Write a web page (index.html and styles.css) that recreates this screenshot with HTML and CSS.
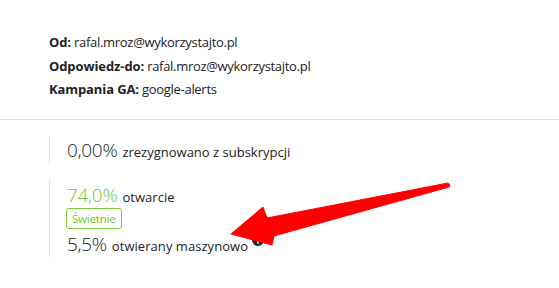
FILE: index.html
```html
<!DOCTYPE html>
<html lang="pl">
<head>
<meta charset="utf-8">
<title>Kampania</title>
<link rel="stylesheet" href="styles.css">
</head>
<body>
<div class="page">
  <section class="meta">
    <div class="meta-row"><b>Od:</b> rafal.mroz@wykorzystajto.pl</div>
    <div class="meta-row"><b>Odpowiedz-do:</b> rafal.mroz@wykorzystajto.pl</div>
    <div class="meta-row"><b>Kampania GA:</b> google-alerts</div>
  </section>
  <section class="stats">
    <div class="stat stat-unsub">
      <div class="stat-line"><span class="stat-value">0,00%</span> <span class="stat-label">zrezygnowano z subskrypcji</span></div>
    </div>
    <div class="stat stat-open">
      <div class="stat-line"><span class="stat-value green">74,0%</span> <span class="stat-label">otwarcie</span></div>
      <div class="badge-row"><span class="badge">Świetnie</span></div>
      <div class="stat-line"><span class="stat-value">5,5%</span> <span class="stat-label">otwierany maszynowo</span><svg class="info" width="12" height="12" viewBox="0 0 12 12"><circle cx="6" cy="6" r="6" fill="#2b2b2b"/><rect x="5.2" y="5" width="1.6" height="4.5" fill="#fff"/><circle cx="6" cy="3.2" r="0.9" fill="#fff"/></svg></div>
    </div>
  </section>
  <svg class="arrow" width="559" height="288" viewBox="0 0 559 288">
    <path d="M231 234 L263 207 L267 218 L448 183 Q451 184.5 449 187 L274 236 L272 245 Z" fill="#ff0000" stroke="#ff0000" stroke-width="1" stroke-linejoin="round"/>
  </svg>
</div>
</body>
</html>
```
FILE: styles.css
```css
html, body {
  margin: 0;
  padding: 0;
  background: #fff;
}
body {
  font-family: "Open Sans", "Liberation Sans", sans-serif;
  color: #222;
}
.page {
  position: relative;
  width: 559px;
  height: 288px;
  overflow: hidden;
}
.meta {
  padding: 31px 0 17.5px 49px;
  border-bottom: 1px solid #dcdcdc;
  font-size: 13px;
  letter-spacing: -0.3px;
}
.meta-row {
  line-height: 23.5px;
  height: 23.5px;
}
.meta-row b {
  font-weight: 700;
  letter-spacing: -0.1px;
}
.stats {
  padding: 16px 0 0 49px;
  display: flex;
  flex-direction: column;
  gap: 17px;
}
.stat {
  border-left: 1px solid #dcdcdc;
  padding-left: 17px;
}
.stat-line {
  font-size: 19px;
  font-weight: 300;
  line-height: 24px;
  height: 24px;
  white-space: nowrap;
}
.stat-unsub {
  padding-top: 1px;
}
.stat-unsub .stat-line {
  line-height: 26px;
  height: 26px;
}
.stat-open {
  padding: 3px 0 1px 16px;
}
.stat-open .stat-line {
  padding-left: 1px;
}
.stat-value {
  font-size: 19px;
  font-weight: 300;
  letter-spacing: -0.3px;
  color: #222;
}
.stat-value.green {
  color: #6fc52a;
}
.stat-label {
  font-size: 13px;
  font-weight: 400;
  line-height: 1;
  letter-spacing: 0;
  color: #222;
}
.stat-open .stat-label {
  letter-spacing: 0.05px;
}
.info {
  margin-left: 4px;
  vertical-align: 5px;
}
.badge-row {
  display: flex;
  margin: 1px 0 3px;
}
.badge {
  font-size: 11.5px;
  line-height: 19px;
  letter-spacing: -0.2px;
  color: #6fc52a;
  border: 1px solid #7cc73a;
  border-radius: 3px;
  padding: 0 5px;
}
.arrow {
  position: absolute;
  left: 0;
  top: 0;
  pointer-events: none;
}
```
